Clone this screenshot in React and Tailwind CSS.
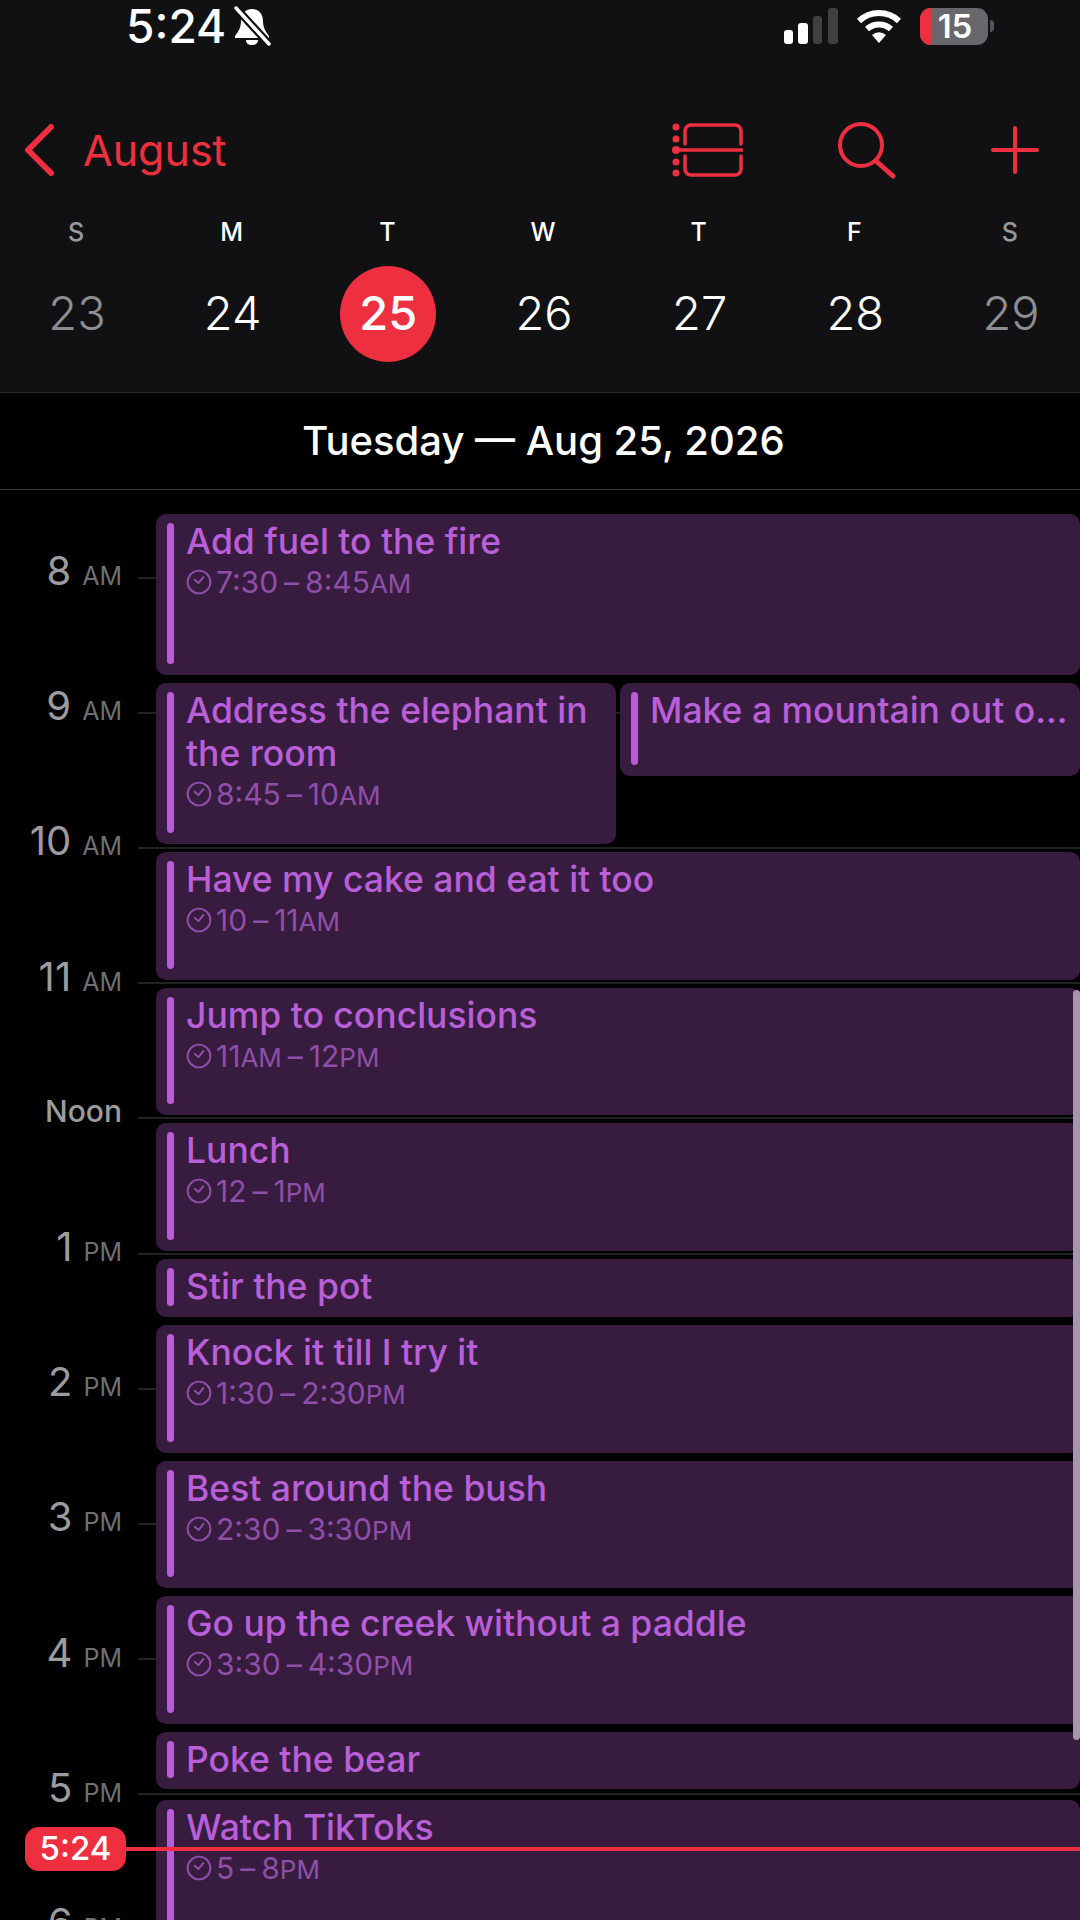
import React from "react";

const days = [
  { letter: "S", num: "23", muted: true },
  { letter: "M", num: "24" },
  { letter: "T", num: "25", today: true },
  { letter: "W", num: "26" },
  { letter: "T", num: "27" },
  { letter: "F", num: "28" },
  { letter: "S", num: "29", muted: true },
];

const hours = [
  ["8", "AM"], ["9", "AM"], ["10", "AM"], ["11", "AM"], ["Noon", ""], ["1", "PM"],
  ["2", "PM"], ["3", "PM"], ["4", "PM"], ["5", "PM"], ["6", "PM"],
];

const BellOff = () => (
  <svg width="38" height="40" viewBox="0 0 38 40">
    <path d="M19 3c-7 0-11 5-11 12 0 7-3 11-6 15v2h34v-2c-3-4-6-8-6-15 0-7-4-12-11-12z" fill="#fff" />
    <path d="M13 34h12c0 3-2 5-6 5s-6-2-6-5z" fill="#fff" />
    <path d="M3 2l33 36" stroke="#111113" strokeWidth="8" />
    <path d="M3 2l33 36" stroke="#fff" strokeWidth="3.5" strokeLinecap="round" />
  </svg>
);

const Signal = () => (
  <svg width="54" height="36" viewBox="0 0 54 36">
    <rect x="0" y="22" width="9" height="14" rx="3" fill="#fff" />
    <rect x="14" y="15" width="10" height="21" rx="3" fill="#fff" />
    <rect x="29" y="8" width="9" height="28" rx="3" fill="#3f3f41" />
    <rect x="44" y="0" width="10" height="36" rx="3" fill="#3f3f41" />
  </svg>
);

const Wifi = () => (
  <svg width="46" height="36" viewBox="0 0 46 36" fill="none" stroke="#fff" strokeWidth="6">
    <path d="M3 13a29 29 0 0 1 40 0" />
    <path d="M11 21a18 18 0 0 1 24 0" />
    <path d="M16 27a10 10 0 0 1 14 0l-7 8z" fill="#fff" stroke="none" />
  </svg>
);

const ListIcon = () => (
  <svg width="71" height="54" viewBox="0 0 71 54" fill="none" stroke="#ee2f3f" strokeWidth="3.5" strokeLinecap="round">
    <path d="M13 21V8a6 6 0 0 1 6-6h44a6 6 0 0 1 6 6v13" />
    <path d="M13 33v13a6 6 0 0 0 6 6h44a6 6 0 0 0 6-6V33" />
    <path d="M4 27h66" />
    <g fill="#ee2f3f" stroke="none">
      <circle cx="4" cy="4" r="3.5" />
      <circle cx="4" cy="16" r="3.5" />
      <circle cx="4" cy="27" r="4" />
      <circle cx="4" cy="39" r="3.5" />
      <circle cx="4" cy="50" r="3.5" />
    </g>
  </svg>
);

const SearchIcon = () => (
  <svg width="58" height="57" viewBox="0 0 58 57" fill="none" stroke="#ee2f3f" strokeWidth="4" strokeLinecap="round">
    <circle cx="23" cy="23" r="21" />
    <path d="M38 39l17 15" strokeWidth="5" />
  </svg>
);

const PlusIcon = () => (
  <svg width="48" height="48" viewBox="0 0 48 48" fill="none" stroke="#ee2f3f" strokeWidth="4" strokeLinecap="round">
    <path d="M24 2v44M2 24h44" />
  </svg>
);

const Chevron = () => (
  <svg width="30" height="52" viewBox="0 0 30 52" fill="none" stroke="#ee2f3f" strokeWidth="6" strokeLinecap="round" strokeLinejoin="round">
    <path d="M27 3L4 26l23 23" />
  </svg>
);

const ClockIcon = () => (
  <svg width="26" height="26" viewBox="0 0 24 24" fill="none" stroke="#8f4fa8" strokeWidth="1.8" strokeLinecap="round" strokeLinejoin="round">
    <circle cx="12" cy="12" r="10.5" />
    <path d="M8 10l3.5 3L16 7.5" />
  </svg>
);

const Small = ({ children }) => <span className="text-[26px]">{children}</span>;

const TimeRange = ({ t }) => (
  <div className="flex items-center gap-[4px] mt-[3px] h-[32px] text-[30px] text-[#8f4fa8]">
    <ClockIcon />
    <span className="whitespace-nowrap">
      {t[0]}
      {t[1] && <Small>{t[1]}</Small>}
      <span className="mx-[6px]">–</span>
      {t[2]}
      {t[3] && <Small>{t[3]}</Small>}
    </span>
  </div>
);

const EventCard = ({ title, time, className }) => (
  <div className={`flex rounded-[10px] bg-[#381c40] pl-[11px] pr-[8px] pt-[9px] pb-[11px] gap-[12px] ${className}`}>
    <div className="w-[7px] shrink-0 rounded-full bg-[#b85cd8]" />
    <div className="min-w-0">
      <div className="text-[35.5px] leading-[43px] -mt-[3px] font-medium text-[#b95fd8]">{title}</div>
      {time && <TimeRange t={time} />}
    </div>
  </div>
);

const events = [
  { title: "Have my cake and eat it too", time: ["10", "", "11", "AM"], className: "h-[128px]" },
  { title: "Jump to conclusions", time: ["11", "AM", "12", "PM"], className: "h-[127px]" },
  { title: "Lunch", time: ["12", "", "1", "PM"], className: "h-[128px]" },
  { title: "Stir the pot", className: "h-[58px]" },
  { title: "Knock it till I try it", time: ["1:30", "", "2:30", "PM"], className: "h-[128px]" },
  { title: "Best around the bush", time: ["2:30", "", "3:30", "PM"], className: "h-[127px]" },
  { title: "Go up the creek without a paddle", time: ["3:30", "", "4:30", "PM"], className: "h-[128px]" },
  { title: "Poke the bear", className: "h-[57px]" },
  { title: "Watch TikToks", time: ["5", "", "8", "PM"], className: "mt-[3px] h-[300px]" },
];

export default function App() {
  return (
    <div className="relative h-[1920px] w-[1080px] overflow-hidden bg-black font-['Inter',sans-serif] text-white">
      {/* top header */}
      <div className="h-[393px] border-b border-[#2c2c2e] bg-[#111113]">
        <div className="flex h-[52px] items-center pl-[126px] pr-[86px]">
          <span className="text-[46px] font-medium leading-[52px]">5:24</span>
          <div className="ml-[7px]"><BellOff /></div>
          <div className="ml-auto flex items-center gap-[18px]">
            <Signal />
            <Wifi />
            <div className="flex items-center">
              <div className="flex h-[37px] w-[68px] overflow-hidden rounded-[11px] bg-[#68686c]">
                <div className="w-[11px] bg-[#ee2f3f]" />
                <span className="flex-1 pr-[9px] text-center text-[33px] font-semibold leading-[37px]">15</span>
              </div>
              <div className="ml-[2px] h-[12px] w-[4px] rounded-r-full bg-[#56565a]" />
            </div>
          </div>
        </div>

        <div className="mt-[68px] flex h-[60px] items-center pl-[24px] pr-[41px]">
          <Chevron />
          <span className="ml-[29px] text-[43px] leading-none text-[#ee2f3f]">August</span>
          <div className="ml-auto flex items-center gap-[95px]">
            <ListIcon />
            <SearchIcon />
            <PlusIcon />
          </div>
        </div>

        <div className="mt-[37px] flex justify-between pl-[29px] pr-[21px]">
          {days.map((d, i) => (
            <div key={i} className="flex w-[96px] flex-col items-center">
              <span className={`h-[30px] pr-[2px] text-[25px] font-medium leading-[30px] ${d.muted ? "text-[#9a9a9e]" : "text-white"}`}>
                {d.letter}
              </span>
              <span
                className={`mt-[19px] flex h-[96px] w-[96px] items-center justify-center rounded-full pb-[2px] text-[47px] ${
                  d.today ? "bg-[#ee2f3f] font-medium" : d.muted ? "font-light text-[#8e8e92]" : "font-light text-white"
                }`}
              >
                {d.num}
              </span>
            </div>
          ))}
        </div>
      </div>

      {/* date title */}
      <div className="flex h-[97px] items-center justify-center border-b border-[#333336] pl-[7px] text-[40px] font-medium">
        Tuesday — Aug 25, 2026
      </div>

      {/* day timeline */}
      <div className="relative">
        <div className="pt-[20px]">
          {hours.map(([h, suffix]) => (
            <div key={h} className="flex h-[135.2px] items-center">
              <div className="mb-[13px] w-[122px] shrink-0 text-right text-[#9c9c9e]">
                {suffix ? (
                  <span className="text-[40px] leading-none">
                    {h}
                    <span className="ml-[11px] text-[25px] text-[#6f6f72]">{suffix}</span>
                  </span>
                ) : (
                  <span className="text-[30px] font-medium leading-none">{h}</span>
                )}
              </div>
              <div className="ml-[16px] h-[2px] flex-1 bg-[#232325]" />
            </div>
          ))}
        </div>

        {/* events sit over the hour lines */}
        <div className="absolute left-[156px] right-0 top-[24px] flex flex-col gap-[8px]">
          <EventCard title="Add fuel to the fire" time={["7:30", "", "8:45", "AM"]} className="h-[161px]" />
          <div className="flex h-[161px] items-start gap-[4px]">
            <EventCard title="Address the elephant in the room" time={["8:45", "", "10", "AM"]} className="h-[161px] w-[460px]" />
            <EventCard title="Make a mountain out o..." className="h-[93px] flex-1 whitespace-nowrap" />
          </div>
          {events.map((e) => (
            <EventCard key={e.title} {...e} />
          ))}
        </div>

        {/* current time marker */}
        <div className="absolute left-[25px] right-0 top-[1337px] flex items-center">
          <span className="flex h-[44px] w-[101px] items-center justify-center rounded-[14px] bg-[#ee2f3f] text-[33px] font-medium">
            5:24
          </span>
          <div className="h-[4px] flex-1 bg-[#ee2f3f]" />
        </div>

        {/* scrollbar */}
        <div className="absolute right-0 top-[500px] h-[750px] w-[7px] rounded-full bg-[#a795ae]" />
      </div>
    </div>
  );
}
